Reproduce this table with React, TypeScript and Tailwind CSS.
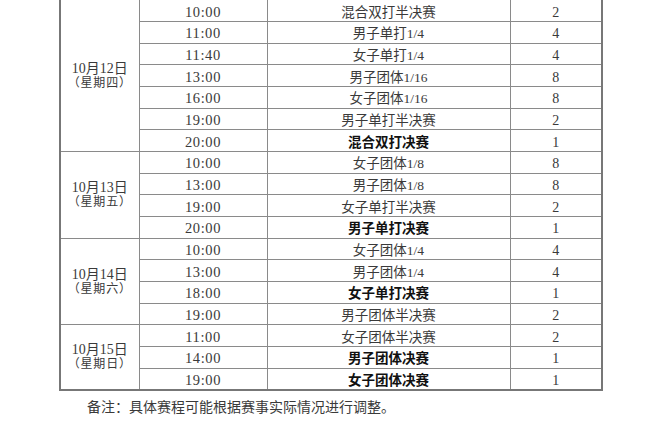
const FONT = "font-['Liberation_Serif','Noto_Sans_CJK_SC',serif]";

type Match = { time: string; event: string; count: number; final?: boolean };
type Day = { date: string; week: string; matches: Match[] };

const DAYS: Day[] = [
	{
		date: '10月12日',
		week: '（星期四）',
		matches: [
			{ time: '10:00', event: '混合双打半决赛', count: 2 },
			{ time: '11:00', event: '男子单打1/4', count: 4 },
			{ time: '11:40', event: '女子单打1/4', count: 4 },
			{ time: '13:00', event: '男子团体1/16', count: 8 },
			{ time: '16:00', event: '女子团体1/16', count: 8 },
			{ time: '19:00', event: '男子单打半决赛', count: 2 },
			{ time: '20:00', event: '混合双打决赛', count: 1, final: true },
		],
	},
	{
		date: '10月13日',
		week: '（星期五）',
		matches: [
			{ time: '10:00', event: '女子团体1/8', count: 8 },
			{ time: '13:00', event: '男子团体1/8', count: 8 },
			{ time: '19:00', event: '女子单打半决赛', count: 2 },
			{ time: '20:00', event: '男子单打决赛', count: 1, final: true },
		],
	},
	{
		date: '10月14日',
		week: '（星期六）',
		matches: [
			{ time: '10:00', event: '女子团体1/4', count: 4 },
			{ time: '13:00', event: '男子团体1/4', count: 4 },
			{ time: '18:00', event: '女子单打决赛', count: 1, final: true },
			{ time: '19:00', event: '男子团体半决赛', count: 2 },
		],
	},
	{
		date: '10月15日',
		week: '（星期日）',
		matches: [
			{ time: '11:00', event: '女子团体半决赛', count: 2 },
			{ time: '14:00', event: '男子团体决赛', count: 1, final: true },
			{ time: '19:00', event: '女子团体决赛', count: 1, final: true },
		],
	},
];

// every cell shares the same thin grey rule
const cell = 'border border-[#8a8a8a] p-0 text-center align-middle';

export default function App() {
	return (
		<div className={`h-[427px] w-[660px] overflow-hidden bg-white text-[#3a3a3a] ${FONT}`}>
			<table className="ml-[59px] w-[542px] table-fixed border-collapse border-2 border-t-0 border-[#777]">
				<colgroup>
					<col className="w-[79px]" />
					<col className="w-[128px]" />
					<col className="w-[243px]" />
					<col className="w-[92px]" />
				</colgroup>
				<tbody>
					{DAYS.map((day, dayIndex) =>
						day.matches.map((match, index) => (
							<tr
								key={`${day.date}-${match.time}`}
								className={`h-[21.67px] ${dayIndex === 0 && index === 0 ? '[&>td]:border-t-0' : ''}`}
							>
								{index === 0 && (
									<td
										rowSpan={day.matches.length}
										className={`${cell} border-l-2 border-l-[#777]`}
									>
										<div className="text-[14px] leading-[14px]">
											{day.date}
										</div>
										<div className="text-[12px] leading-[14px] tracking-[0.8px]">
											{day.week}
										</div>
									</td>
								)}
								<td className={`${cell} pt-[3px] text-[14.5px] leading-[17px] tracking-[0.6px]`}>
									{match.time}
								</td>
								<td
									className={`${cell} pt-[3px] text-[13.5px] leading-[17px] ${
										match.final ? 'font-bold text-[#111]' : ''
									}`}
								>
									{match.event}
								</td>
								<td className={`${cell} border-r-2 border-r-[#777] pt-[3px] text-[14px] leading-[17px]`}>
									{match.count}
								</td>
							</tr>
						))
					)}
				</tbody>
			</table>
			<p className="ml-[87px] mt-[7px] text-[14px] leading-[20px]">
				备注：具体赛程可能根据赛事实际情况进行调整。
			</p>
		</div>
	);
}
